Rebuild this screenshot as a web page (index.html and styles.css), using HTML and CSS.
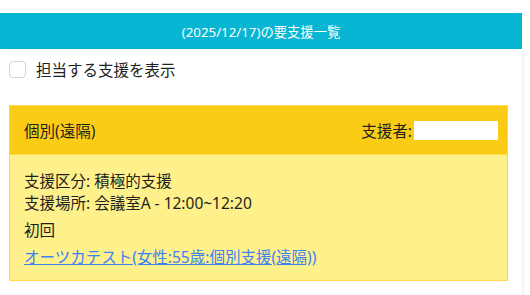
FILE: index.html
```html
<!DOCTYPE html>
<html lang="ja">
<head>
<meta charset="utf-8">
<link rel="stylesheet" href="styles.css">
</head>
<body>
<div class="page">
  <header class="title-bar">(2025/12/17)の要支援一覧</header>
  <main class="content">
    <label class="filter">
      <span class="check"></span>
      <span class="filter-text">担当する支援を表示</span>
    </label>
    <section class="card">
      <div class="card-head">
        <span class="kind">個別(遠隔)</span>
        <span class="supporter">支援者:<span class="name-box"></span></span>
      </div>
      <div class="card-body">
        <div class="info">
          <div>支援区分: 積極的支援</div>
          <div>支援場所: 会議室A - 12:00~12:20</div>
        </div>
        <div class="first">初回</div>
        <a class="person" href="#">オーツカテスト(女性:55歳:個別支援(遠隔))</a>
      </div>
    </section>
  </main>
</div>
</body>
</html>
```
FILE: styles.css
```css
html, body {
  margin: 0;
  padding: 0;
  background: #ffffff;
}
body {
  font-family: "Noto Sans", "Noto Sans CJK JP", sans-serif;
  color: #1f1f1f;
}
.page {
  width: 522px;
  padding-top: 13px;
}
.title-bar {
  height: 36px;
  background: #08b6d4;
  color: #ffffff;
  font-size: 13.3px;
  display: flex;
  align-items: center;
  justify-content: center;
}
.content {
  min-height: 246px;
  box-shadow: 2px 0 2px rgba(0, 0, 0, 0.05);
  padding: 12px 14px 0 9px;
}
.filter {
  display: flex;
  align-items: center;
  gap: 10px;
  height: 17px;
}
.check {
  width: 15px;
  height: 15px;
  border: 1px solid #d4d4d4;
  border-radius: 4px;
  background: #fff;
}
.filter-text {
  font-size: 15.5px;
  color: #222;
}
.card {
  margin-top: 27px;
  width: 497px;
  border: 1px solid #fcd84a;
  background: #fef08a;
}
.card-head {
  height: 49px;
  background: #facc15;
  display: flex;
  align-items: center;
  justify-content: space-between;
  padding: 0 9px 0 14px;
  font-size: 15.5px;
  border-bottom: 1px solid #fde047;
  box-sizing: border-box;
}
.supporter {
  display: flex;
  align-items: center;
  gap: 2px;
}
.name-box {
  width: 84px;
  height: 19px;
  background: #ffffff;
}
.card-body {
  padding: 15px 14px 12px;
  font-size: 15.5px;
  line-height: 22px;
  display: flex;
  flex-direction: column;
  gap: 5px;
}
.person {
  color: #3b82f6;
  text-decoration: underline;
  align-self: flex-start;
}
```
